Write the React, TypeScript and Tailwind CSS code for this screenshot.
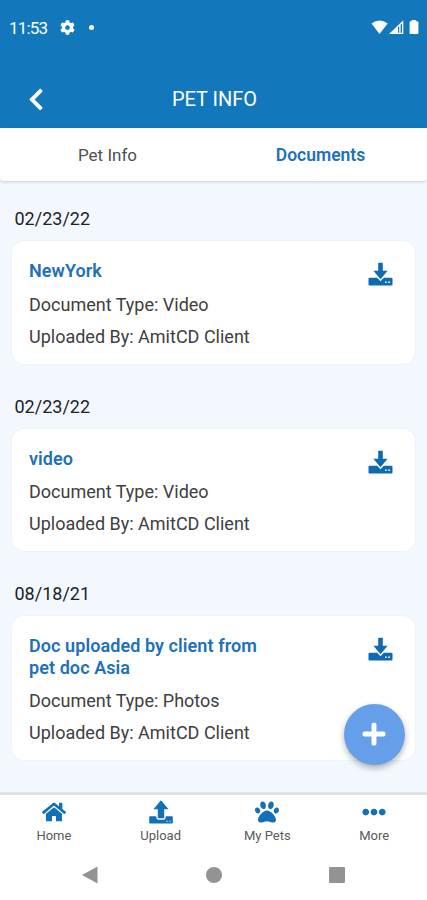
import { ReactNode } from "react";
import {
  FaChevronLeft,
  FaCog,
  FaEllipsisH,
  FaHome,
  FaPaw,
  FaPlus,
} from "react-icons/fa";

type Doc = {
  date: string;
  title: string;
  type: string;
  uploadedBy: string;
};

const docs: Doc[] = [
  {
    date: "02/23/22",
    title: "NewYork",
    type: "Video",
    uploadedBy: "AmitCD Client",
  },
  {
    date: "02/23/22",
    title: "video",
    type: "Video",
    uploadedBy: "AmitCD Client",
  },
  {
    date: "08/18/21",
    title: "Doc uploaded by client from pet doc Asia",
    type: "Photos",
    uploadedBy: "AmitCD Client",
  },
];

const DownloadIcon = () => (
  <svg width="25" height="24" viewBox="0 0 25 24" fill="currentColor">
    <path d="M10.200 1.200q0-.5.5-.5h3.600q.5 0 .5.5v7.500h4.800L12.500 17.200 5.400 8.700h4.800z" />
    <path
      fillRule="evenodd"
      d="M1.500 15.800H9.200l3.300 3.500 3.300-3.500h7.700q1 0 1 1v5.700q0 1-1 1h-22q-1 0-1-1v-5.700q0-1 1-1zM17 19.400v1.700h1.700v-1.700zM20.200 19.400v1.700h1.700v-1.700z"
    />
  </svg>
);

const UploadIcon = () => (
  <svg width="24" height="24" viewBox="0 0 24 24" fill="currentColor">
    <path d="M12 .2l7.600 9h-4.400v8.500q0 .6-.6.6H9.400q-.6 0-.6-.6V9.200H4.400z" />
    <path
      fillRule="evenodd"
      d="M1 16.200h6.200q.4 3.600 2 3.600h5.600q1.600 0 2-3.600H23q.8 0 .8.8v5.700q0 .8-.8.8H1q-.8 0-.8-.8V17q0-.8.8-.8zM17.300 20.800v1h1.200v-1zM20.300 20.800v1h1.200v-1z"
    />
  </svg>
);

const StatusBar = () => (
  <div className="flex h-[54px] items-center justify-between pl-[9px] pr-[7px] text-white">
    <div className="flex items-center">
      <span className="w-[51px] pt-px text-[17px] leading-6 tracking-[-0.8px]">
        11:53
      </span>
      <FaCog className="h-[15px] w-[15px]" />
      <span className="ml-[14px] h-[5px] w-[5px] rounded-full bg-white" />
    </div>
    <svg width="50" height="15" viewBox="0 0 50 15" fill="currentColor">
      <path d="M1.500 3.600Q9.500-2.800 17.700 3.600L9.500 14z" />
      <path
        fillRule="evenodd"
        d="M19 14L33.300.3V14zM28 7.200v5.500h1.200V6.200zM30.600 4.800v7.900h1.400V3.600z"
      />
      <path d="M41.700 0h4.400v1.300h1.300q1 0 1 1V13q0 1-1 1h-6.800q-1 0-1-1V2.300q0-1 1-1h1.100z" />
    </svg>
  </div>
);

const DocumentCard = ({ date, title, type, uploadedBy }: Doc) => (
  <section className="mb-[31px]">
    <p className="mb-[10px] pl-[2.5px] text-lg leading-6 text-[#202326]">
      {date}
    </p>
    <div className="flex items-start justify-between rounded-[12px] bg-white pt-[19px] pr-[22px] pb-[15px] pl-[17px] shadow-[0_0_2px_rgba(120,150,180,0.15)]">
      <div>
        <h2 className="mb-[11px] w-[240px] text-lg leading-[21.5px] font-semibold tracking-[0.08px] text-[#2170b8]">
          {title}
        </h2>
        <p className="mb-2 text-lg leading-6 text-[#404040]">
          Document Type: {type}
        </p>
        <p className="text-lg leading-6 text-[#404040]">
          Uploaded By: {uploadedBy}
        </p>
      </div>
      <button className="mt-[2px] text-[#0e6ab3]">
        <DownloadIcon />
      </button>
    </div>
  </section>
);

const NavItem = ({ icon, label }: { icon: ReactNode; label: string }) => (
  <button className="flex flex-1 flex-col items-center text-[#1370b8]">
    <span className="flex h-6 items-center pl-px">{icon}</span>
    <span className="mt-1 pl-px text-[13px] leading-4 text-[#5a5a5a]">
      {label}
    </span>
  </button>
);

const App = () => {
  return (
    <div className="relative flex h-[900px] w-full flex-col overflow-hidden bg-[#f2f8fe] font-[Roboto,sans-serif]">
      <header className="h-[128px] shrink-0 bg-[#1278bb]">
        <StatusBar />
        <div className="mt-[16px] flex h-[58px] items-center px-[26px] text-white">
          <FaChevronLeft className="h-[25px] w-[20px]" />
          <h1 className="flex-1 pr-[18px] text-center text-[20px] leading-6">
            PET INFO
          </h1>
        </div>
      </header>
      <div className="z-10 flex h-[53px] shrink-0 items-center rounded-b-[4px] bg-white text-[17px] shadow-[0_1px_3px_rgba(60,80,90,0.25)]">
        <button className="flex-1 pt-[2px] pl-px text-[#505050]">
          Pet Info
        </button>
        <button className="flex-1 pt-[2px] text-[17.5px] font-semibold text-[#2170b8]">
          Documents
        </button>
      </div>
      <main className="min-h-0 flex-1 overflow-hidden px-3 pt-[26px]">
        {docs.map((doc, i) => (
          <DocumentCard key={i} {...doc} />
        ))}
      </main>
      <button className="absolute top-[704px] left-[344px] flex h-[61px] w-[61px] items-center justify-center rounded-full bg-[#659fe9] pr-px pb-px text-white shadow-[0_3px_6px_rgba(0,0,0,0.3)]">
        <FaPlus className="h-[26px] w-[26px]" />
      </button>
      <footer className="h-[108px] shrink-0 border-t-[3px] border-[#dde4e8] bg-white">
        <nav className="flex pt-[5px]">
          <NavItem icon={<FaHome size={24} />} label="Home" />
          <NavItem icon={<UploadIcon />} label="Upload" />
          <NavItem icon={<FaPaw size={24} />} label="My Pets" />
          <NavItem icon={<FaEllipsisH size={24} />} label="More" />
        </nav>
        <div className="mt-[22px] flex h-[18px] items-center justify-between pr-[82px] pl-[82px] text-[#939393]">
          <svg width="16" height="18" viewBox="0 0 16 18" fill="currentColor">
            <path d="M0 9L15.500.5v17z" />
          </svg>
          <span className="h-4 w-4 rounded-full bg-[#939393]" />
          <span className="h-4 w-4 rounded-[1px] bg-[#939393]" />
        </div>
      </footer>
    </div>
  );
};

export default App;
